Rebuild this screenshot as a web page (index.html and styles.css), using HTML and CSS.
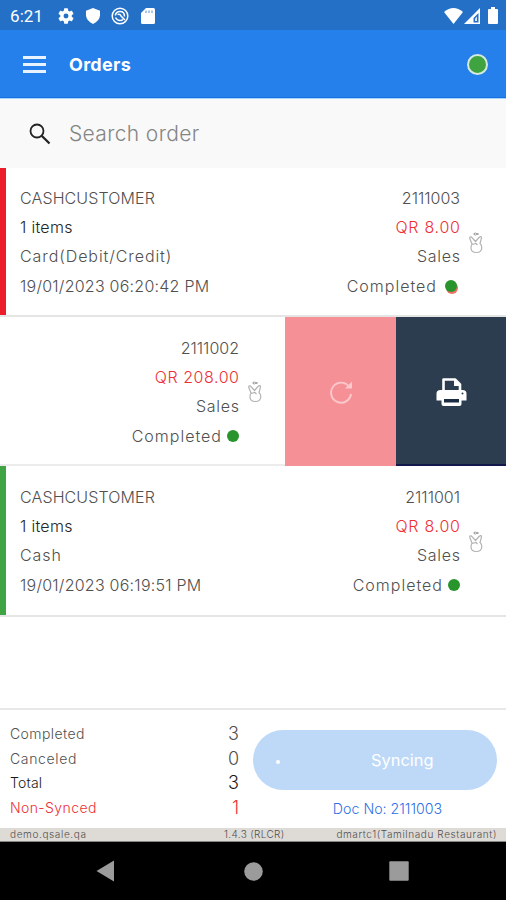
FILE: index.html
```html
<!DOCTYPE html>
<html lang="en">
<head>
<meta charset="utf-8">
<title>Orders</title>
<link rel="stylesheet" href="styles.css">
</head>
<body>
<svg width="0" height="0" class="defs">
  <symbol id="swipe" viewBox="0 0 16 24">
    <path d="M4 13L1.800 7.500Q1.500 5.300 3.500 6L7.500 10.500L11 6.500Q13.500 4.500 13.500 7L12 12.500Q14 14 13.800 17Q13.300 21.500 8.500 21.500Q3 21.500 3 17Q3 14.500 4 13ZM4 13.500L8 12.500L9.500 14" fill="none" stroke="#b3b3b3" stroke-width="1.200"/>
    <path d="M5 3L7.500 1V5ZM8 2H10.500V4H8Z" fill="#a5a5a5"/>
  </symbol>
</svg>
<header class="status">
  <span class="clock">6:21</span>
  <svg class="gear" viewBox="2 2 20 20"><path d="M19.140 12.940c.04-.3.060-.610.060-.940s-.020-.640-.070-.940l2.030-1.580a.49.490 0 0 0 .12-.610l-1.920-3.320a.49.490 0 0 0-.590-.220l-2.390.960a7 7 0 0 0-1.620-.940l-.360-2.540a.48.480 0 0 0-.480-.410h-3.840a.48.480 0 0 0-.470.410l-.360 2.540c-.590.240-1.130.570-1.620.940l-2.390-.960a.48.480 0 0 0-.590.220L2.740 8.870a.48.480 0 0 0 .12.610l2.030 1.580a7 7 0 0 0 0 1.880l-2.030 1.580a.49.490 0 0 0-.12.610l1.920 3.320c.12.220.370.290.590.220l2.390-.960c.5.380 1.030.700 1.620.940l.360 2.540c.05.240.240.410.480.410h3.840c.240 0 .440-.170.470-.410l.360-2.540a7 7 0 0 0 1.620-.940l2.390.960c.220.080.470 0 .590-.220l1.920-3.320a.48.480 0 0 0-.12-.610zM12 15.100a3.100 3.100 0 1 1 0-6.200 3.100 3.100 0 0 1 0 6.200z"/></svg>
  <svg class="shield" viewBox="0 0 14 16"><path d="M7 0L14 2.800V7.500Q13.500 13 7 16Q.5 13 0 7.500V2.800Z"/></svg>
  <svg class="radar" viewBox="0 0 18 18"><g fill="none" stroke="#fff"><circle cx="9" cy="9" r="7.800" stroke-width="1.500"/><path d="M4.300 8.500Q5 4.500 9 4.500Q13.500 4.500 13.500 9.500M4.500 10.500Q6 13.500 9 13.500Q11 13.500 12 12.500M6.500 7.500Q9 6.500 10 9L14 13" stroke-width="1.500"/></g></svg>
  <svg class="card" viewBox="0 0 14 16"><path d="M5 0H12.500Q14 0 14 1.500V14.500Q14 16 12.500 16H1.500Q0 16 0 14.500V5Z"/><path d="M5 2.500V5M8 2.500V5M11 2.500V5" stroke="#7fa9dc" stroke-width="1.300"/></svg>
  <span class="grow"></span>
  <svg class="wifi" viewBox="0 0 19 16"><path d="M0 4Q9.500-4 19 4L9.500 16Z"/></svg>
  <svg class="signal" viewBox="0 0 16 16"><path d="M16 0V16H0ZM14.500 5L9.500 10V14.500H14.500Z" fill-rule="evenodd"/><path d="M11 10.500L13 8.500V13H11Z" fill="#d5e5f7"/></svg>
  <svg class="battery" viewBox="0 0 10 17"><path d="M3 0H7V2H9Q10 2 10 3V16Q10 17 9 17H1Q0 17 0 16V3Q0 2 1 2H3Z"/></svg>
</header>
<nav class="appbar">
  <span class="menu"><i></i><i></i><i></i></span>
  <h1><span>Orders</span></h1>
  <span class="online"></span>
</nav>
<div class="search">
  <svg viewBox="0 0 22 22"><circle cx="8" cy="8" r="6.500" fill="none" stroke="#222" stroke-width="1.800"/><path d="M12.700 12.700L20.500 20.500" stroke="#222" stroke-width="2.300"/></svg>
  <span class="placeholder">Search order</span>
</div>
<main>
  <article class="order red">
    <div class="info"><p class="name">CASHCUSTOMER</p><p class="items">1 items</p><p class="pay">Card(Debit/Credit)</p><p class="date">19/01/2023 06:20:42 PM</p></div>
    <div class="sum"><p class="no">2111003</p><p class="price">QR 8.00</p><p class="type">Sales</p><p class="state"><span>Completed</span><b class="dot pending"></b></p></div>
    <svg class="hand"><use href="#swipe"/></svg>
  </article>
  <article class="order swiped">
    <div class="sum"><p class="no">2111002</p><p class="price long">QR 208.00</p><p class="type">Sales</p><p class="state"><span>Completed</span><b class="dot"></b></p></div>
    <svg class="hand"><use href="#swipe"/></svg>
    <div class="action retry"><svg width="24" height="24" viewBox="0 0 24 24"><path d="M20 6.500A10 10 0 1 0 22 14" fill="none" stroke="#fbc9cb" stroke-width="1.900"/><path d="M23 1.500V8.500H16Z" fill="#fbc9cb"/></svg></div>
    <div class="action print"><svg width="31" height="28" viewBox="0 0 30 28"><path d="M7 12V1.500H18.500L23.500 6.500V12" fill="none" stroke="#fff" stroke-width="2.600" stroke-linejoin="round"/><path d="M17.500 1V8H24.500Z" fill="#fff"/><path d="M4 12H26Q30 12 30 15.500V22.500H25V26Q25 28 23 28H7Q5 28 5 26V22.500H0V15.500Q0 12 4 12Z" fill="#fff"/><path d="M7.500 21H22.500V24.500H7.500Z" fill="#1c2d43"/><circle cx="26" cy="15.500" r="1" fill="#2d3d50"/></svg></div>
  </article>
  <article class="order green">
    <div class="info"><p class="name">CASHCUSTOMER</p><p class="items">1 items</p><p class="cash">Cash</p><p class="date">19/01/2023 06:19:51 PM</p></div>
    <div class="sum"><p class="no">2111001</p><p class="price">QR 8.00</p><p class="type">Sales</p><p class="state"><span>Completed</span><b class="dot"></b></p></div>
    <svg class="hand"><use href="#swipe"/></svg>
  </article>
</main>
<footer class="summary">
  <dl>
    <div><dt class="completed">Completed</dt><dd>3</dd></div>
    <div><dt class="canceled">Canceled</dt><dd>0</dd></div>
    <div class="total"><dt>Total</dt><dd>3</dd></div>
    <div class="unsynced"><dt>Non-Synced</dt><dd>1</dd></div>
  </dl>
  <div class="sync"><div class="button"><i></i><span>Syncing</span></div><p>Doc No: 2111003</p></div>
</footer>
<div class="meta"><span class="host">demo.qsale.qa</span><span class="version">1.4.3 (RLCR)</span><span class="device">dmartc1(Tamilnadu Restaurant)</span></div>
<div class="softkeys">
  <svg width="19" height="22" viewBox="0 0 19 22"><path d="M18 .5V21.500L.5 11Z"/></svg>
  <svg class="home" width="19" height="19" viewBox="0 0 19 19"><circle cx="9.500" cy="9.500" r="9.300"/></svg>
  <svg width="20" height="20" viewBox="0 0 20 20"><rect x=".3" y=".3" width="19.400" height="19.400" rx="1"/></svg>
</div>
</body>
</html>
```
FILE: styles.css
```css
* { box-sizing: border-box; margin: 0; padding: 0; }
body { width: 506px; height: 900px; overflow: hidden; background: #fff; color: #505050; font-family: Inter, "Open Sans", sans-serif; font-weight: 300; font-size: 16px; display: flex; flex-direction: column; }
.defs { position: absolute; }
svg { display: block; flex: none; }
.status { height: 30px; background: #2470c7; display: flex; align-items: center; padding: 1px 8px 0 10px; fill: #fff; }
.clock { color: #fff; font: 400 17px/30px Roboto, sans-serif; width: 48px; letter-spacing: .1px; }
.gear { width: 16px; height: 16px; margin-right: 12px; }
.shield { width: 14px; height: 16px; margin-right: 11px; }
.radar { width: 18px; height: 18px; margin-right: 12px; }
.card { width: 14px; height: 16px; }
.grow { flex: 1; }
.wifi { width: 19px; height: 16px; margin-right: 1px; }
.signal { width: 16px; height: 16px; margin-right: 8px; }
.battery { width: 10px; height: 17px; }
.appbar { height: 69px; background: #2680eb; border-bottom: 1px solid #a9d4fa; box-shadow: inset 0 -1px #1571df; display: flex; align-items: center; padding: 0 18px 0 23px; }
.menu { width: 46px; display: grid; gap: 4px; }
.menu i { width: 23px; height: 3px; background: #e8f3ff; }
h1 { flex: 1; color: #fff; font-weight: 700; font-size: 18px; letter-spacing: .3px; }
.online { width: 21px; height: 21px; border: 2px solid #d5eadc; border-radius: 50%; background: #3fa33f; }
.search { height: 69px; background: #f9f9f9; display: flex; align-items: center; padding: 0 29px; }
.search svg { width: 22px; height: 22px; margin-right: 18px; }
.placeholder { font-size: 21px; color: #858585; letter-spacing: .35px; }
main { height: 540px; }
.order { height: 149px; display: flex; border-bottom: 2px solid #e5e5e5; padding-left: 20px; }
.order.green { height: 151px; padding-top: 1px; }
.red { box-shadow: inset 6px 0 #ed1c29; }
.green { box-shadow: inset 6px 0 #40a344; }
.info { padding-top: 16px; flex: 1; }
.sum { padding-top: 16px; width: 150px; text-align: right; display: flex; flex-direction: column; align-items: flex-end; }
.order p { height: 29.200px; line-height: 29px; white-space: nowrap; }
.name { letter-spacing: .12px; }
.items { color: #252525; letter-spacing: .3px; }
.pay { letter-spacing: .92px; }
.cash { letter-spacing: .9px; }
.date { letter-spacing: .24px; }
.price { color: #ee3035; letter-spacing: .75px; margin-right: -.75px; }
.price.long { letter-spacing: .55px; margin-right: -.55px; }
.type { letter-spacing: .7px; margin-right: -.7px; }
.state { display: flex; align-items: center; letter-spacing: 1px; }
.dot { width: 12px; height: 12px; border-radius: 50%; background: #27952c; margin-left: 5px; }
.pending { margin: 0 3px 0 8px; box-shadow: 1px 2px #ef7067; }
.hand { width: 16px; height: 24px; margin: 63px 22px 0 8px; }
.swiped { padding-left: 0; border-bottom-color: #ececec; }
.swiped .sum { width: 239px; padding-top: 17px; }
.action { width: 111px; display: grid; place-items: center; }
.retry { background: #f59196; height: 149px; }
.print { background: #2d3d50; height: 149px; width: 110px; border-bottom: 2px solid #12184b; padding-top: 2px; }
.summary { height: 120px; border-top: 2px solid #e8e8e8; display: flex; padding: 11px 9px 0 10px; }
dl { width: 229px; margin-right: 14px; }
dl div { display: flex; justify-content: space-between; height: 24.500px; line-height: 25px; }
dt { font-size: 14px; letter-spacing: .2px; }
dd { font-size: 18px; }
.completed { letter-spacing: .4px; }
.canceled { letter-spacing: .65px; }
.total { color: #191919; }
.unsynced { color: #ed3035; }
.unsynced dt { letter-spacing: .4px; }
.sync { flex: 1; }
.button { height: 60px; margin-top: 9px; border-radius: 30px; background: #bed9f8; color: #fff; display: flex; align-items: center; padding-left: 23px; }
.button i { width: 4px; height: 4px; border-radius: 50%; background: #fff; margin: 4px 91px 0 0; }
.button span { font-size: 16.400px; font-weight: 400; }
.sync p { color: #2d71e5; text-align: center; font-size: 14.200px; line-height: 38px; margin-left: 25px; }
.meta { height: 14px; background: #dedad6; border-bottom: 1px solid #858585; display: flex; padding: 0 9px 0 10px; font-size: 10px; line-height: 13px; white-space: nowrap; }
.host { width: 214px; letter-spacing: .62px; }
.version { letter-spacing: .35px; }
.device { margin-left: auto; letter-spacing: .6px; }
.softkeys { height: 58px; background: #000; display: flex; align-items: center; padding: 0 97px 0 96px; justify-content: space-between; fill: #9b9b9b; }
.home { margin-left: 2px; }
```
